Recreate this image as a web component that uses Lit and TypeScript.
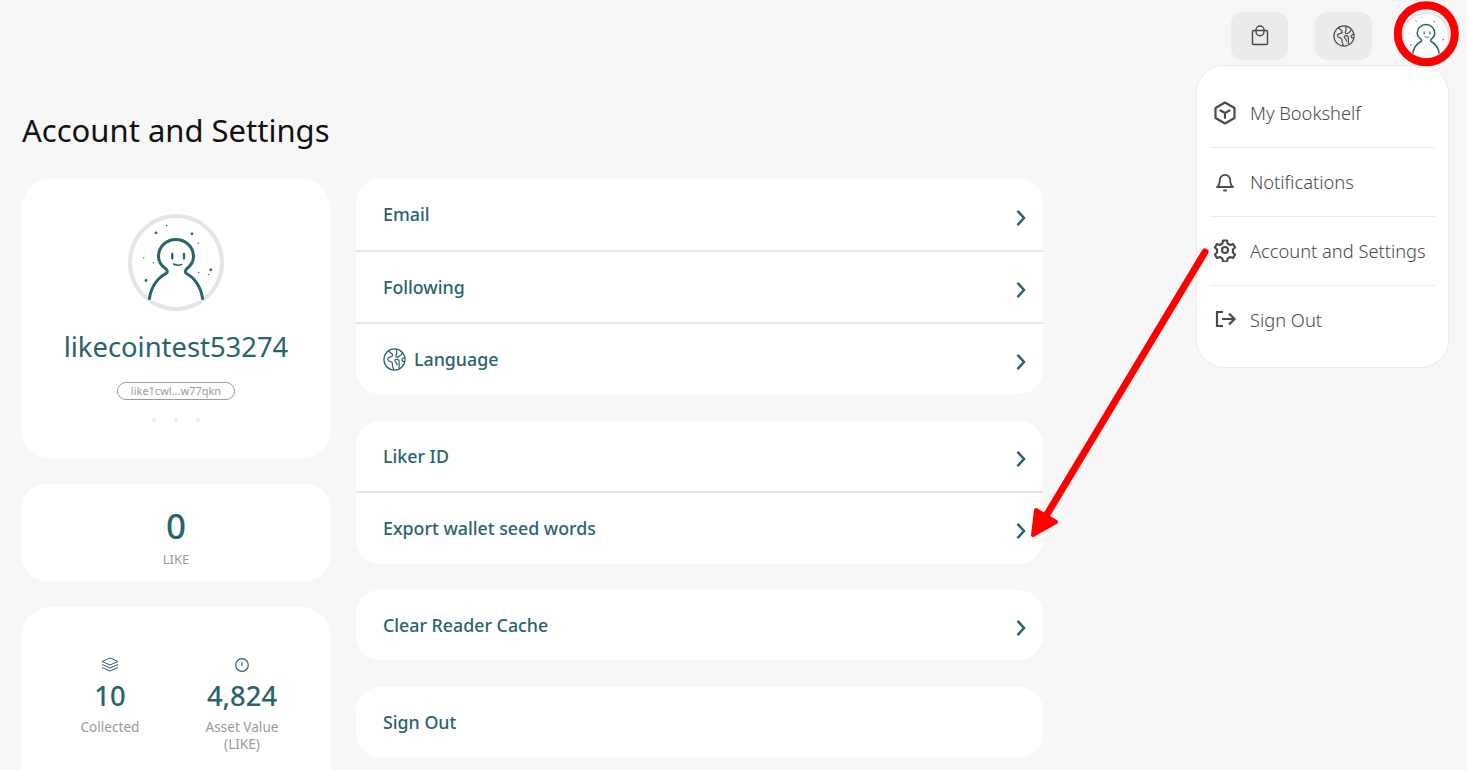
import { LitElement, html, css } from "lit";
import { customElement } from "lit/decorators.js";

const avatar = () => html`<svg viewBox="0 0 88 88" width="100%" height="100%" fill="none">
  <g transform="translate(-4 -4)">
  <path d="M21.5 84 C23 72 30 63 38 59 C40 58 39.5 56 38 54.5 C33 51 30.5 46.5 30.5 42 C30.5 32.5 38 25 48 25 C57.5 25 65.5 32.5 65.5 42 C65.5 46.5 63 51 58.5 54.5 C57 56 57 58 58.5 59 C66 63 73 72 74.5 84" stroke="#28646e" stroke-width="3" stroke-linecap="round"/>
  <path d="M44.3 39.500v4.500M56 39.500v4.500" stroke="#28646e" stroke-width="2.300" stroke-linecap="round"/>
  <path d="M45.500 49.500c2.500 1.300 5.500 1.500 8 .6" stroke="#28646e" stroke-width="1.600" stroke-linecap="round"/>
  <g fill="#28646e">
    <circle cx="28" cy="18.300" r="1.400"/><circle cx="64" cy="19.300" r="1.400"/><circle cx="38.700" cy="11" r=".8"/>
    <circle cx="70.300" cy="28.700" r=".7"/><circle cx="15.700" cy="43.300" r=".7"/><circle cx="25.300" cy="48.300" r=".7"/>
    <circle cx="82.700" cy="55.300" r="1.400"/><circle cx="70.700" cy="58" r=".7"/><circle cx="80.700" cy="60" r=".7"/><circle cx="18" cy="66" r="1.400"/>
  </g></g></svg>`;

const globe = (color: string) => html`<svg viewBox="0 0 24 24" width="100%" height="100%" fill="none" stroke=${color} stroke-width="1.300" stroke-linejoin="round">
  <circle cx="12" cy="12" r="11"/>
  <path d="M6 2.800 C7 5 9.200 5.400 10 7 C10.600 8.400 8.800 9.400 7.400 9.400 C5.400 9.500 4.400 11 5.400 12.800 C6.400 14.400 8.600 13.800 9.400 15 C10 16 9.600 17.200 10 18.600 C10.400 20 10.800 21.600 11.400 22.800"/>
  <path d="M14.400 1.400 C13.400 3.400 14.800 4.600 14.200 6 C13.800 7.200 12.800 8.200 13.600 9.200 C14.400 10 15.800 9.200 16.800 8.800 C18.200 8.200 19.400 7 20 4.800"/>
  <path d="M12.400 12.400 C14 11.400 15.800 11.800 16.600 13 C17.200 14 16.600 15.400 16.800 16.600 C17 17.800 17.200 18.800 16.600 20.800 M12.400 12.400 C11.800 13.600 13 14.400 13.800 15.200 C14.600 16 14.200 17 15 18"/>
  <path d="M22.800 10.200 C20.800 10.400 19.400 11.400 19.800 12.800 C20.200 14.200 21.600 14.400 22.800 14.200"/>
</svg>`;

const chevron = () => html`<svg class="chev" viewBox="0 0 12 18" width="12" height="18" fill="none"><path d="M2.500 1.800 L9 9 L2.500 16.200" stroke="#28646e" stroke-width="2.500"/></svg>`;

@customElement("app-root")
export class AppRoot extends LitElement {
  static styles = css`
    :host { display: block; height: 770px; overflow: hidden; position: relative; background: #f7f7f7;
      font-family: "Noto Sans", "Open Sans", sans-serif; color: #28646e; }
    * { box-sizing: border-box; }
    .topbar { display: flex; justify-content: flex-end; align-items: flex-start; gap: 27px; padding: 12px 17px 0 0; height: 60px; }
    .tbtn { width: 57px; height: 48px; border-radius: 12px; background: #ebebeb; display: flex; align-items: center; justify-content: center; color: #4a4a4a; }
    .tbtn .ic { width: 22px; height: 22px; display: block; }
    .topav { width: 48px; height: 48px; border-radius: 50%; background: #fff; border: 2px solid #e5e5e5; margin-left: 3px; overflow: hidden; }
    h1 { margin: 0; font-size: 31px; font-weight: 400; line-height: 44px; color: #111; padding: 48px 0 0 22px; }
    .content { display: flex; gap: 26px; padding: 27px 0 0 22px; align-items: flex-start; }
    .left { width: 308px; display: flex; flex-direction: column; gap: 26px; flex: none; }
    .right { width: 687px; display: flex; flex-direction: column; gap: 26.67px; flex: none; }
    .card { background: #fff; border-radius: 24px; }
    .profile { height: 279px; border-radius: 28px; display: flex; flex-direction: column; align-items: center; padding-top: 35px; }
    .bigav { width: 96px; height: 97px; border-radius: 50%; border: 4px solid #e5e5e5; flex: none; }
    .name { font-size: 27.4px; line-height: 40px; margin-top: 16px; white-space: nowrap; }
    .pill { width: 118px; height: 18px; margin-top: 15px; border: 1px solid #9b9b9b; border-radius: 9px; font-size: 11px; line-height: 15px; color: #9b9b9b; text-align: center; }
    .dots { display: flex; gap: 18px; margin-top: 18px; }
    .dots i { width: 4px; height: 4px; border-radius: 50%; background: #ebebeb; display: block; }
    .like { height: 97px; display: flex; flex-direction: column; align-items: center; padding-top: 19px; }
    .like b { font-weight: 500; font-size: 35px; line-height: 46px; }
    .lbl { font-size: 13.6px; line-height: 18px; color: #9b9b9b; text-align: center; }
    .like .lbl { font-size: 13px; margin-top: 1px; }
    .stats { height: 240px; border-radius: 28px; display: grid; grid-template-columns: 132px 132px; justify-content: center; padding-top: 50px; align-content: start; }
    .stat { display: flex; flex-direction: column; align-items: center; }
    .stat .sic { width: 18px; height: 16px; display: block; }
    .stat b { font-weight: 500; font-size: 27.4px; line-height: 38px; margin-top: 4px; }
    .stat .lbl { line-height: 17px; margin-top: 3px; }
    .list { overflow: hidden; display: flex; flex-direction: column; }
    .row { height: 72px; display: flex; align-items: center; justify-content: space-between; padding: 0 16.5px 0 27px; font-size: 17.8px; border-top: 2px solid #e5e5e5; font-weight: 500; }
    .row:first-child { border-top: 0; height: 71px; }
    .row > span { display: flex; align-items: center; gap: 8px; }
    .row:first-child > span { position: relative; top: -1px; }
    .row.solo { height: 70px; border-top: 0; }
    .row.solo > span { top: 0; }
    .two .row:first-child { height: 70.33px; }
    .two .row:first-child > span { top: 0; }
    .two .row:last-child { height: 72.67px; }
    .chev { position: relative; top: 3px; }
    .rowglobe { width: 23px; height: 23px; display: block; }
    .menu { position: absolute; left: 1196px; top: 65px; width: 253px; height: 303px; background: #fff; border: 1px solid #ebebeb; border-radius: 28px; padding: 12px 13px; }
    .mi { height: 69px; display: flex; align-items: center; gap: 13px; font-size: 18.300px; color: #4a4a4a; border-top: 1px solid #ebebeb; padding: 0 0 2px 3px; font-weight: 300; }
    .mi:first-child { border-top: 0; padding-bottom: 0; }
    .mi svg { width: 24px; height: 24px; flex: none; }
    .anno { position: absolute; left: 0; top: 0; pointer-events: none; }
  `;

  render() {
    const row = (t: string, solo = false) => html`<div class="row ${solo ? "solo" : ""}"><span>${t}</span>${t === "Sign Out" ? "" : chevron()}</div>`;
    return html`
      <div class="topbar">
        <div class="tbtn"><svg class="ic" viewBox="0 0 22 22" fill="none" stroke="#4a4a4a" stroke-width="1.400"><rect x="3.500" y="5.500" width="15" height="14" rx="1"/><path d="M7 6.500V5a4 4 0 0 1 8 0v1.500a4 4.300 0 0 1-8 0z"/></svg></div>
        <div class="tbtn"><span class="ic">${globe("#4a4a4a")}</span></div>
        <div class="topav">${avatar()}</div>
      </div>
      <h1>Account and Settings</h1>
      <div class="content">
        <div class="left">
          <div class="card profile">
            <div class="bigav">${avatar()}</div>
            <div class="name">likecointest53274</div>
            <div class="pill">like1cwl...w77qkn</div>
            <div class="dots"><i></i><i></i><i></i></div>
          </div>
          <div class="card like"><b>0</b><div class="lbl">LIKE</div></div>
          <div class="card stats">
            <div class="stat">
              <svg class="sic" viewBox="0 0 18 16" fill="none" stroke="#28646e" stroke-width="1"><path d="M9 1l8 3.500-8 3.500-8-3.500zM1 7.500l8 3.500 8-3.500M1 10.500l8 3.500 8-3.500"/></svg>
              <b>10</b><div class="lbl">Collected</div>
            </div>
            <div class="stat">
              <svg class="sic" viewBox="0 0 18 16" fill="none" stroke="#28646e" stroke-width="1.200"><circle cx="9" cy="8" r="6.300"/><path d="M9 5v4"/></svg>
              <b>4,824</b><div class="lbl">Asset Value<br />(LIKE)</div>
            </div>
          </div>
        </div>
        <div class="right">
          <div class="card list">
            ${row("Email")}
            ${row("Following")}
            <div class="row"><span><span class="rowglobe">${globe("#28646e")}</span>Language</span>${chevron()}</div>
          </div>
          <div class="card list two">${row("Liker ID")}${row("Export wallet seed words")}</div>
          <div class="card list">${row("Clear Reader Cache", true)}</div>
          <div class="card list">${row("Sign Out", true)}</div>
        </div>
      </div>
      <div class="menu">
        <div class="mi"><svg viewBox="0 0 24 24" fill="none" stroke="#4a4a4a" stroke-width="2.200" stroke-linejoin="round"><path d="M12 1.500l9.500 5.500v10L12 22.500 2.500 17V7z"/><path d="M7.500 9.500L12 12l4.500-2.500M12 12v5" stroke-linecap="round"/></svg>My Bookshelf</div>
        <div class="mi"><svg viewBox="0 0 24 24" fill="none" stroke="#4a4a4a" stroke-width="1.800" stroke-linejoin="round"><path d="M4 18c2-1.500 2.800-4 2.800-7a5.200 5.200 0 0 1 10.400 0c0 3 .8 5.500 2.800 7z"/><path d="M11 21.500h2" stroke-linecap="round" stroke-width="2"/></svg>Notifications</div>
        <div class="mi"><svg viewBox="0 0 24 24" fill="none" stroke="#4a4a4a" stroke-width="2.100" stroke-linejoin="round"><circle cx="12" cy="12" r="3"/><path d="M10 2.500h4l.6 3 2.600 1.500 2.900-1 2 3.500-2.300 2a7 7 0 0 1 0 3l2.300 2-2 3.500-2.900-1-2.600 1.500-.6 3h-4l-.6-3-2.600-1.500-2.900 1-2-3.500 2.300-2a7 7 0 0 1 0-3l-2.300-2 2-3.500 2.900 1 2.600-1.500z"/></svg>Account and Settings</div>
        <div class="mi"><svg viewBox="0 0 24 24" fill="none" stroke="#4a4a4a" stroke-width="2.200"><path d="M10 5H4v14h6"/><path d="M9 12h12M16 6.500l5.500 5.500-5.500 5.500"/></svg>Sign Out</div>
      </div>
      <svg class="anno" width="1467" height="770" fill="none">
        <circle cx="1426.300" cy="33.700" r="28.500" stroke="#fe0000" stroke-width="8"/>
        <path d="M1205 252 L1046 516" stroke="#fe0000" stroke-width="7" stroke-linecap="round"/>
        <path d="M1033 535 L1036 510 L1056 522 Z" fill="#fe0000" stroke="#fe0000" stroke-width="4" stroke-linejoin="round"/>
      </svg>
    `;
  }
}
